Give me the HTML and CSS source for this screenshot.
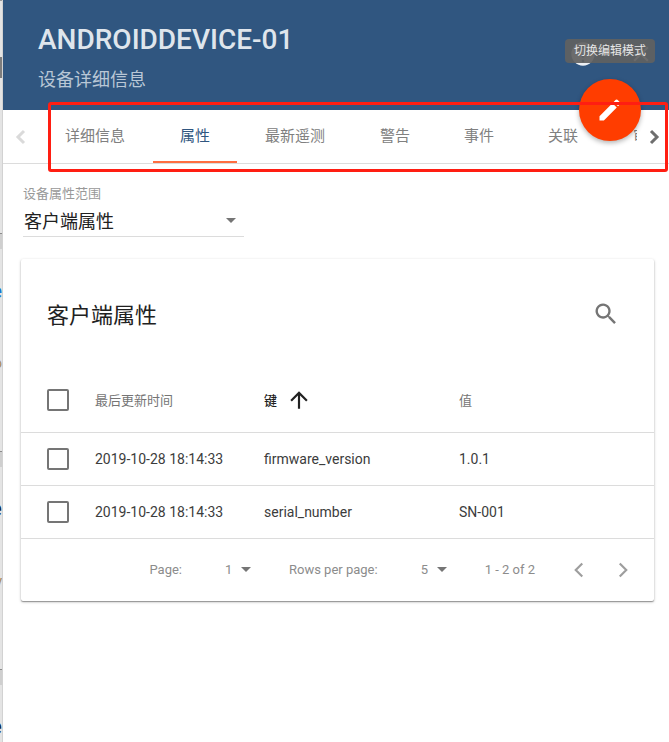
FILE: index.html
```html
<!DOCTYPE html>
<html lang="zh-CN">
<head>
<meta charset="utf-8">
<meta name="viewport" content="width=device-width, initial-scale=1">
<title>ANDROIDDEVICE-01</title>
<link rel="stylesheet" href="styles.css">
</head>
<body>
<div class="backdrop" aria-hidden="true">
  <div class="backdrop-top"><span class="backdrop-thumb"></span></div>
  <div class="backdrop-gap"></div>
  <div class="backdrop-card"><span class="peek peek-link">e</span><span class="peek">o</span></div>
  <div class="backdrop-gap"></div>
  <div class="backdrop-card"><span class="peek peek-title">e</span><span class="peek">y</span></div>
  <div class="backdrop-gap"></div>
  <div class="backdrop-card"><span class="peek peek-title">e</span></div>
</div>
<main class="panel">
  <header class="header">
    <div>
      <h1 class="title">ANDROIDDEVICE-01</h1>
      <p class="subtitle">设备详细信息</p>
    </div>
    <div class="header-actions">
      <button class="icon-button" type="button" aria-label="帮助">
        <svg width="28" height="28" viewBox="0 0 24 24"><path fill="currentColor" d="M12 2a10 10 0 1 0 0 20 10 10 0 0 0 0-20zm1 17h-2v-2h2v2zm2.100-7.700-.900.900c-.800.800-1.200 1.400-1.200 2.800h-2v-.500c0-1.100.400-2.100 1.200-2.800l1.200-1.300A2 2 0 1 0 10 9H8a4 4 0 1 1 7.100 2.300z"/></svg>
      </button>
      <button class="icon-button" type="button" aria-label="关闭">
        <svg width="26" height="26" viewBox="0 0 24 24"><path fill="currentColor" d="M19 6.400 17.600 5 12 10.600 6.400 5 5 6.400 10.600 12 5 17.600 6.400 19 12 13.400 17.600 19 19 17.600 13.400 12z"/></svg>
      </button>
      <span class="tooltip" role="tooltip" id="edit-tip">切换编辑模式</span>
    </div>
    <button class="fab" type="button" aria-label="编辑" aria-describedby="edit-tip">
      <svg width="28" height="28" viewBox="0 0 24 24"><path fill="currentColor" d="M3 17.250V21h3.750L17.810 9.940l-3.750-3.750L3 17.250zM20.710 7.040a1 1 0 0 0 0-1.410l-2.340-2.340a1 1 0 0 0-1.410 0l-1.830 1.830 3.750 3.750 1.830-1.830z"/></svg>
    </button>
  </header>

  <nav class="tabs">
    <button class="tab-arrow" type="button" aria-label="上一页" disabled>
      <svg width="24" height="24" viewBox="0 0 24 24"><path d="M15 6l-6 6 6 6"/></svg>
    </button>
    <div class="tab-list" role="tablist">
      <button class="tab tab-wide" type="button" role="tab">详细信息</button>
      <button class="tab tab-active" type="button" role="tab" aria-selected="true">属性</button>
      <button class="tab tab-wide" type="button" role="tab">最新遥测</button>
      <button class="tab" type="button" role="tab">警告</button>
      <button class="tab" type="button" role="tab">事件</button>
      <button class="tab" type="button" role="tab">关联</button>
      <button class="tab tab-wide" type="button" role="tab">审计日志</button>
    </div>
    <button class="tab-arrow tab-arrow-next" type="button" aria-label="下一页">
      <svg width="24" height="24" viewBox="0 0 24 24"><path d="M9 6l6 6-6 6"/></svg>
    </button>
    <div class="highlight"></div>
  </nav>

  <section class="scope">
    <label class="scope-label" for="scope">设备属性范围</label>
    <div class="scope-field">
      <select class="scope-select" id="scope"><option>客户端属性</option></select>
      <svg class="caret" width="10" height="5" viewBox="0 0 10 5"><path d="M0 0h10L5 5z"/></svg>
    </div>
  </section>

  <section class="card">
    <div class="card-head">
      <h2 class="card-title">客户端属性</h2>
      <button class="icon-button search" type="button" aria-label="搜索">
        <svg width="28" height="28" viewBox="0 0 24 24"><path fill="currentColor" d="M15.500 14h-.790l-.280-.270A6.500 6.500 0 1 0 13.730 14.430l.270.280v.790l5 4.990L20.490 19l-4.990-5zm-6 0a4.500 4.500 0 1 1 0-9 4.500 4.500 0 0 1 0 9z"/></svg>
      </button>
    </div>
    <table class="table">
      <thead>
        <tr>
          <th class="col-check"><input class="check" type="checkbox" aria-label="全选"></th>
          <th class="col-time">最后更新时间</th>
          <th class="col-key"><span class="sorted">键<svg width="26" height="26" viewBox="0 0 24 24"><path fill="currentColor" d="M4 12l1.410 1.410L11 7.830V20h2V7.830l5.580 5.590L20 12l-8-8-8 8z"/></svg></span></th>
          <th>值</th>
        </tr>
      </thead>
      <tbody>
        <tr>
          <td class="col-check"><input class="check" type="checkbox" aria-label="firmware_version"></td>
          <td>2019-10-28 18:14:33</td>
          <td>firmware_version</td>
          <td>1.0.1</td>
        </tr>
        <tr>
          <td class="col-check"><input class="check" type="checkbox" aria-label="serial_number"></td>
          <td>2019-10-28 18:14:33</td>
          <td>serial_number</td>
          <td>SN-001</td>
        </tr>
      </tbody>
    </table>
    <footer class="pager">
      <div class="pager-group">
        <label for="page">Page:</label>
        <span class="pager-field"><select class="pager-select" id="page"><option>1</option></select><svg class="caret" width="10" height="5" viewBox="0 0 10 5"><path d="M0 0h10L5 5z"/></svg></span>
      </div>
      <div class="pager-group">
        <label for="rows">Rows per page:</label>
        <span class="pager-field"><select class="pager-select" id="rows"><option>5</option></select><svg class="caret" width="10" height="5" viewBox="0 0 10 5"><path d="M0 0h10L5 5z"/></svg></span>
      </div>
      <span>1 - 2 of 2</span>
      <div class="pager-nav">
        <button class="icon-button" type="button" aria-label="上一页" disabled><svg width="26" height="26" viewBox="0 0 24 24"><path d="M15 6l-6 6 6 6"/></svg></button>
        <button class="icon-button" type="button" aria-label="下一页" disabled><svg width="26" height="26" viewBox="0 0 24 24"><path d="M9 6l6 6-6 6"/></svg></button>
      </div>
    </footer>
  </section>
</main>
</body>
</html>
```
FILE: styles.css
```css
* {
  box-sizing: border-box;
}

body {
  margin: 0;
  min-height: 100vh;
  display: grid;
  grid-template-columns: 3px minmax(0, 1fr);
  font-family: Roboto, "Noto Sans CJK SC", sans-serif;
  font-size: 14px;
  color: #212121;
  background: #fff;
}

h1, h2, p {
  margin: 0;
  font-weight: 400;
}

button, select {
  font: inherit;
  color: inherit;
  background: none;
  border: 0;
  padding: 0;
  margin: 0;
}

svg {
  display: block;
}

/* Sliver of the page that lies behind the panel */
.backdrop {
  height: 100vh;
  overflow: hidden;
  background: #e4e4e4;
  border-right: 1px solid #d2d2d2;
}

.backdrop-top {
  height: 233px;
  padding-top: 56px;
  border-top: 1px solid #999;
}

.backdrop-thumb {
  display: block;
  width: 2px;
  height: 21px;
  background: #7d7d7d;
}

.backdrop-gap {
  height: 16px;
  border-top: 1px solid #8c8c8c;
  background: #cfcfcf;
}

.backdrop-card {
  display: flex;
  flex-direction: column;
  gap: 48px;
  height: 202px;
  padding-top: 30px;
}

.peek {
  align-self: flex-end;
  font-size: 14px;
  line-height: 24px;
  color: #a58a5c;
}

.peek-link {
  font-size: 20px;
  color: #1976d2;
}

.peek-title {
  font-size: 22px;
  color: #10243c;
}

/* Header */
.panel {
  min-width: 0;
}

.header {
  position: relative;
  display: flex;
  justify-content: space-between;
  height: 110px;
  padding: 20px 14px 0 35px;
  background: #305680;
  color: #dfe5ec;
}

.title {
  font-size: 28px;
  font-weight: 500;
  line-height: 40px;
}

.subtitle {
  margin-top: 7px;
  font-size: 18px;
  line-height: 26px;
  color: #b9c7d6;
}

.header-actions {
  position: relative;
  display: flex;
  align-items: flex-start;
  gap: 30px;
  padding-top: 20px;
}

.icon-button {
  display: grid;
  place-items: center;
  width: 28px;
  height: 28px;
}

.header-actions .icon-button {
  color: #eceff3;
}

.tooltip {
  position: absolute;
  top: 19px;
  right: 0;
  padding: 0 9px;
  border-radius: 4px;
  background: rgba(97, 97, 97, 0.92);
  color: #e6e6e6;
  font-size: 12px;
  line-height: 24px;
  white-space: nowrap;
}

.fab {
  position: absolute;
  right: 28px;
  bottom: -31px;
  z-index: 1;
  display: grid;
  place-items: center;
  width: 62px;
  height: 62px;
  border-radius: 50%;
  background: #ff3d00;
  color: #fff;
  box-shadow: 0 2px 5px rgba(0, 0, 0, 0.3);
}

/* Tabs */
.tabs {
  position: relative;
  display: flex;
  height: 54px;
  border-bottom: 1px solid #dcdcdc;
}

.tab-arrow {
  flex: none;
  display: grid;
  place-items: center;
  width: 34px;
  padding-left: 2px;
  color: #6e6e6e;
}

.tab-arrow-next {
  width: 32px;
}

.tab-arrow:disabled {
  color: #dadada;
}

.tab-arrow path,
.pager-nav path {
  fill: none;
  stroke: currentColor;
  stroke-width: 2;
}

.tab-arrow path {
  stroke-width: 3;
}

.tab-list {
  flex: 1;
  display: flex;
  min-width: 0;
  overflow: hidden;
}

.tab {
  flex: none;
  width: 84px;
  padding-bottom: 2px;
  border-bottom: 2px solid transparent;
  font-size: 15px;
  white-space: nowrap;
  color: #808080;
}

.tab-wide {
  width: 116px;
}

.tab-active {
  border-bottom-color: #ff6e40;
  color: #305680;
}

.highlight {
  position: absolute;
  z-index: 2;
  top: -8px;
  right: 1px;
  bottom: -9px;
  left: 45px;
  border: 3px solid #ff1e12;
  border-radius: 3px;
  pointer-events: none;
}

/* Attribute scope */
.scope {
  width: 241px;
  padding: 20px 0 0 20px;
}

.scope-label {
  display: block;
  font-size: 13px;
  line-height: 20px;
  color: #999;
}

.scope-field {
  display: flex;
  align-items: center;
  height: 33px;
  padding-right: 8px;
  border-bottom: 1px solid #dcdcdc;
}

.scope-select {
  flex: 1;
  height: 32px;
  padding: 2px 0 0 1px;
  appearance: none;
  font-size: 18px;
}

.caret {
  flex: none;
  fill: #757575;
}

/* Attributes card */
.card {
  margin: 22px 15px 0 18px;
  border-radius: 2px;
  background: #fff;
  box-shadow: 0 1px 3px rgba(0, 0, 0, 0.25), 0 1px 1px rgba(0, 0, 0, 0.3);
}

.card-head {
  display: flex;
  align-items: center;
  justify-content: space-between;
  height: 109px;
  padding: 0 34px 0 26px;
}

.card-title {
  padding-top: 4px;
  font-size: 22px;
  line-height: 32px;
}

.search {
  color: #757575;
}

.table {
  width: 100%;
  table-layout: fixed;
  border-collapse: collapse;
}

.table th,
.table td {
  height: 53px;
  padding: 0;
  border-bottom: 1px solid #dcdcdc;
  text-align: left;
  font-weight: 400;
}

.table th {
  height: 64px;
  font-size: 13px;
  color: #757575;
}

.table td {
  color: #3c3c3c;
}

.table .col-check {
  width: 74px;
  padding-left: 26px;
}

.col-time {
  width: 169px;
}

.col-key {
  width: 195px;
}

.sorted {
  display: flex;
  align-items: center;
  gap: 9px;
  color: #212121;
  font-weight: 500;
}

.check {
  display: block;
  width: 22px;
  height: 22px;
  margin: 0;
  appearance: none;
  border: 2px solid #757575;
  border-radius: 2px;
}

.pager {
  display: flex;
  align-items: center;
  justify-content: flex-end;
  gap: 38px;
  height: 62px;
  padding-right: 17px;
  font-size: 13px;
  color: #8c8c8c;
}

.pager-group {
  display: flex;
  align-items: center;
  gap: 43px;
}

.pager-field {
  display: flex;
  align-items: center;
  gap: 8px;
}

.pager-select {
  appearance: none;
}

.pager-nav {
  display: flex;
  gap: 16px;
  margin-left: -8px;
}

.pager-nav .icon-button:disabled {
  color: #9e9e9e;
}
```
